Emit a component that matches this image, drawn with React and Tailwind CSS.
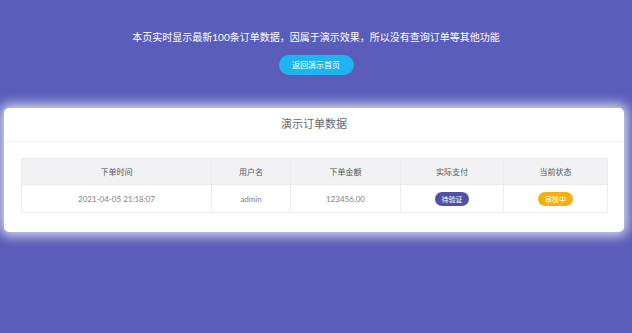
import React from "react";

const font = { fontFamily: 'Lato, "Noto Sans CJK SC", sans-serif' };

export default function App() {
  return (
    <div
      className="w-[632px] h-[333px] bg-[#5a5eba] overflow-hidden flex flex-col items-stretch"
      style={font}
    >
      <div className="pt-[30px] h-[44px] text-center text-white text-[10px] leading-[14px]">
        本页实时显示最新100条订单数据，因属于演示效果，所以没有查询订单等其他功能
      </div>
      <div className="flex justify-center mt-[11px]">
        <button className="w-[75px] h-[20px] rounded-full bg-[#1cb4f1] text-white text-[8px] leading-[20px]">
          返回演示首页
        </button>
      </div>
      <div className="mt-[33px] ml-[4px] mr-[8px] h-[124px] bg-white rounded-[5px] shadow-[0_0_12px_4px_rgba(255,255,255,0.75)] flex flex-col">
        <div className="h-[34px] border-b border-[#efefef] flex items-center justify-center text-[11px] text-[#666]">
          演示订单数据
        </div>
        <div className="pt-[16px] pl-[17px] pr-[17px]">
          <table className="w-[586px] border-collapse table-fixed text-[8px] text-[#666]">
            <colgroup>
              <col className="w-[190px]" />
              <col className="w-[79px]" />
              <col className="w-[110px]" />
              <col className="w-[103px]" />
              <col className="w-[104px]" />
            </colgroup>
            <thead>
              <tr className="h-[26px] bg-[#f2f2f4]">
                {["下单时间", "用户名", "下单金额", "实际支付", "当前状态"].map((h) => (
                  <th key={h} className="border border-[#ebebeb] font-normal text-center text-[#555]">
                    {h}
                  </th>
                ))}
              </tr>
            </thead>
            <tbody>
              <tr className="h-[28px]">
                <td className="border border-[#ebebeb] text-center text-[#808080]">2021-04-05 21:18:07</td>
                <td className="border border-[#ebebeb] text-center text-[#808080]">admin</td>
                <td className="border border-[#ebebeb] text-center text-[#808080]">123456.00</td>
                <td className="border border-[#ebebeb] text-center">
                  <span className="inline-block w-[34px] h-[14px] leading-[14px] rounded-full bg-[#4f51a9] text-white text-[7px] align-middle">
                    待验证
                  </span>
                </td>
                <td className="border border-[#ebebeb] text-center">
                  <span className="inline-block w-[35px] h-[14px] leading-[14px] rounded-full bg-[#f4b010] text-white text-[7px] align-middle">
                    审核中
                  </span>
                </td>
              </tr>
            </tbody>
          </table>
        </div>
      </div>
    </div>
  );
}
